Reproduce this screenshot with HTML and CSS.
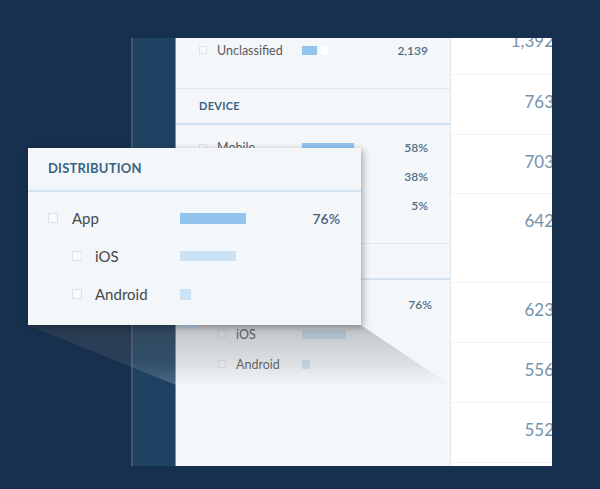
FILE: index.html
```html
<!DOCTYPE html>
<html>
<head>
<meta charset="utf-8">
<link rel="stylesheet" href="styles.css">
</head>
<body>
<div class="stage">
  <div class="board">
    <div class="rail"></div>
    <div class="list">
      <section class="sec sec-top">
        <div class="row">
          <div class="lab"><span class="cb"></span><span class="txt">Unclassified</span></div>
          <div class="bars"><span class="bar bar-main" style="width:15px"></span><span class="bar bar-rest" style="width:7px"></span></div>
          <div class="val">2,139</div>
        </div>
      </section>
      <div class="sec-head">DEVICE</div>
      <section class="sec sec-device">
        <div class="row">
          <div class="lab"><span class="cb"></span><span class="txt">Mobile</span></div>
          <div class="bars"><span class="bar bar-main" style="width:52px"></span></div>
          <div class="val">58%</div>
        </div>
        <div class="row">
          <div class="lab"><span class="cb"></span><span class="txt">Desktop</span></div>
          <div class="bars"><span class="bar bar-main" style="width:34px"></span></div>
          <div class="val">38%</div>
        </div>
        <div class="row">
          <div class="lab"><span class="cb"></span><span class="txt">Tablet</span></div>
          <div class="bars"><span class="bar bar-main" style="width:5px"></span></div>
          <div class="val">5%</div>
        </div>
      </section>
      <div class="sec-head">DISTRIBUTION</div>
      <section class="sec sec-dist">
        <div class="row">
          <div class="lab"><span class="cb"></span><span class="txt">App</span></div>
          <div class="bars"><span class="bar bar-main" style="width:52px"></span></div>
          <div class="val val-dist">76%</div>
        </div>
        <div class="row sub">
          <div class="lab"><span class="cb"></span><span class="txt">iOS</span></div>
          <div class="bars"><span class="bar bar-sub" style="width:44px"></span></div>
          <div class="val"></div>
        </div>
        <div class="row sub">
          <div class="lab"><span class="cb"></span><span class="txt">Android</span></div>
          <div class="bars"><span class="bar bar-sub" style="width:8px"></span></div>
          <div class="val"></div>
        </div>
      </section>
    </div>
    <div class="totals">
      <div class="t-row t-first"><span>1,392</span></div>
      <div class="t-row"><span>763</span></div>
      <div class="t-row t-short"><span>703</span></div>
      <div class="t-row t-tall"><span>642</span></div>
      <div class="t-row"><span>623</span></div>
      <div class="t-row"><span>556</span></div>
      <div class="t-row"><span>552</span></div>
      <div class="t-row"><span>548</span></div>
    </div>
  </div>

  <svg class="beam" width="422" height="61" viewBox="0 0 422 61">
    <defs>
      <linearGradient id="beamGrad" x1="0" y1="0" x2="0" y2="1">
        <stop offset="0" stop-color="rgb(80,80,82)" stop-opacity="0.32"/>
        <stop offset="0.6" stop-color="rgb(120,122,125)" stop-opacity="0.2"/>
        <stop offset="1" stop-color="rgb(240,245,250)" stop-opacity="0.22"/>
      </linearGradient>
    </defs>
    <polygon points="0,0 333,0 422,60 148,60" fill="url(#beamGrad)"/>
  </svg>
  <div class="ghost"></div>

  <div class="popup">
    <div class="pop-head">DISTRIBUTION</div>
    <div class="pop-body">
      <div class="prow">
        <div class="plab"><span class="pcb"></span><span class="ptxt">App</span></div>
        <div class="pbars"><span class="pbar pbar-main" style="width:66px"></span></div>
        <div class="pval">76%</div>
      </div>
      <div class="prow psub">
        <div class="plab"><span class="pcb"></span><span class="ptxt">iOS</span></div>
        <div class="pbars"><span class="pbar pbar-sub" style="width:56px"></span></div>
        <div class="pval"></div>
      </div>
      <div class="prow psub">
        <div class="plab"><span class="pcb"></span><span class="ptxt">Android</span></div>
        <div class="pbars"><span class="pbar pbar-sub" style="width:11px"></span></div>
        <div class="pval"></div>
      </div>
    </div>
  </div>
</div>
</body>
</html>
```

FILE: styles.css
```css
* { box-sizing: border-box; }
html, body {
  margin: 0;
  padding: 0;
  background: #16304e;
  font-family: Lato, "Liberation Sans", sans-serif;
}
.stage {
  position: relative;
  width: 600px;
  height: 489px;
  overflow: hidden;
}
.board {
  margin: 38px 0 0 131px;
  width: 421px;
  height: 428px;
  display: flex;
  overflow: hidden;
}
.rail {
  width: 45px;
  flex: none;
  background: #1f4262;
  border-left: 2px solid #3d5a77;
  border-right: 1px solid #7f91a3;
}
.list {
  width: 275px;
  flex: none;
  background: #f3f7fa;
  border-right: 1px solid #dde6ee;
}
.sec-top {
  height: 51px;
  border-bottom: 1px solid #e0e8ef;
}
.sec-head {
  height: 36px;
  padding: 0 0 2px 23px;
  display: flex;
  align-items: center;
  font-size: 11px;
  font-weight: 700;
  letter-spacing: 0.3px;
  color: #3b6385;
  border-bottom: 2px solid #d3e2ee;
}
.sec-device {
  padding: 8px 0 23px;
  border-bottom: 1px solid #e0e8ef;
}
.sec-dist {
  padding-top: 9px;
}
.row {
  display: flex;
  align-items: center;
  height: 29px;
  padding: 0 22px 0 23px;
}
.sec-top .row { height: 24px; }
.sec-dist .row { height: 30px; }
.lab {
  width: 103px;
  flex: none;
  display: flex;
  align-items: center;
  gap: 10px;
}
.row.sub .lab { padding-left: 19px; }
.cb {
  width: 8px;
  height: 8px;
  border: 1px solid #dbe4ec;
  background: #f8fbfd;
  flex: none;
}
.txt {
  font-size: 12.5px;
  color: #5a5a5a;
}
.bars {
  flex: 1;
  display: flex;
  align-items: center;
  gap: 4px;
}
.bar {
  display: block;
  height: 9px;
}
.bar-main { background: #93c4ee; }
.bar-rest { background: #ffffff; }
.bar-sub { background: #cce3f6; }
.val {
  font-size: 12px;
  font-weight: 600;
  color: #526e88;
  text-align: right;
}
.val-dist { margin-right: -4px; }

.totals {
  width: 101px;
  flex: none;
  background: #ffffff;
  overflow: hidden;
}
.t-row {
  width: 103px;
  height: 60px;
  padding-top: 17px;
  line-height: 20px;
  text-align: right;
  font-size: 17px;
  color: #7493ad;
  border-bottom: 1px solid #eef2f5;
}
.t-first { height: 61px; margin-top: -24px; }
.t-short { height: 59px; }
.t-tall { height: 89px; }

.beam {
  position: absolute;
  left: 28px;
  top: 325px;
  display: block;
}
.ghost {
  position: absolute;
  left: 180px;
  top: 323px;
  width: 17px;
  height: 4px;
  background: #a9cdee;
}

.popup {
  position: absolute;
  left: 28px;
  top: 148px;
  width: 333px;
  height: 177px;
  background: #f3f7fa;
  box-shadow: 2px 2px 7px rgba(0, 0, 0, 0.32);
}
.pop-head {
  height: 44px;
  padding: 0 0 3px 20px;
  display: flex;
  align-items: center;
  font-size: 13px;
  font-weight: 700;
  letter-spacing: 0.2px;
  color: #3b6385;
  border-bottom: 2px solid #d3e3ef;
}
.pop-body {
  padding: 7px 21px 0 20px;
}
.prow {
  height: 38px;
  display: flex;
  align-items: center;
}
.plab {
  width: 132px;
  flex: none;
  display: flex;
  align-items: center;
  gap: 14px;
}
.psub .plab { padding-left: 24px; gap: 13px; }
.pcb {
  width: 10px;
  height: 10px;
  border: 1px solid #dbe4ec;
  background: #f8fbfd;
  flex: none;
}
.ptxt {
  font-size: 15px;
  color: #474747;
}
.pbars {
  flex: 1;
  display: flex;
  align-items: center;
}
.pbar {
  display: block;
  height: 11px;
}
.pbar-main { background: #93c4ee; }
.pbar-sub { background: #cce3f6; height: 10px; }
.psub:last-child .pbar-sub { height: 11px; }
.pval {
  font-size: 14px;
  font-weight: 600;
  color: #435f79;
  text-align: right;
}
```
